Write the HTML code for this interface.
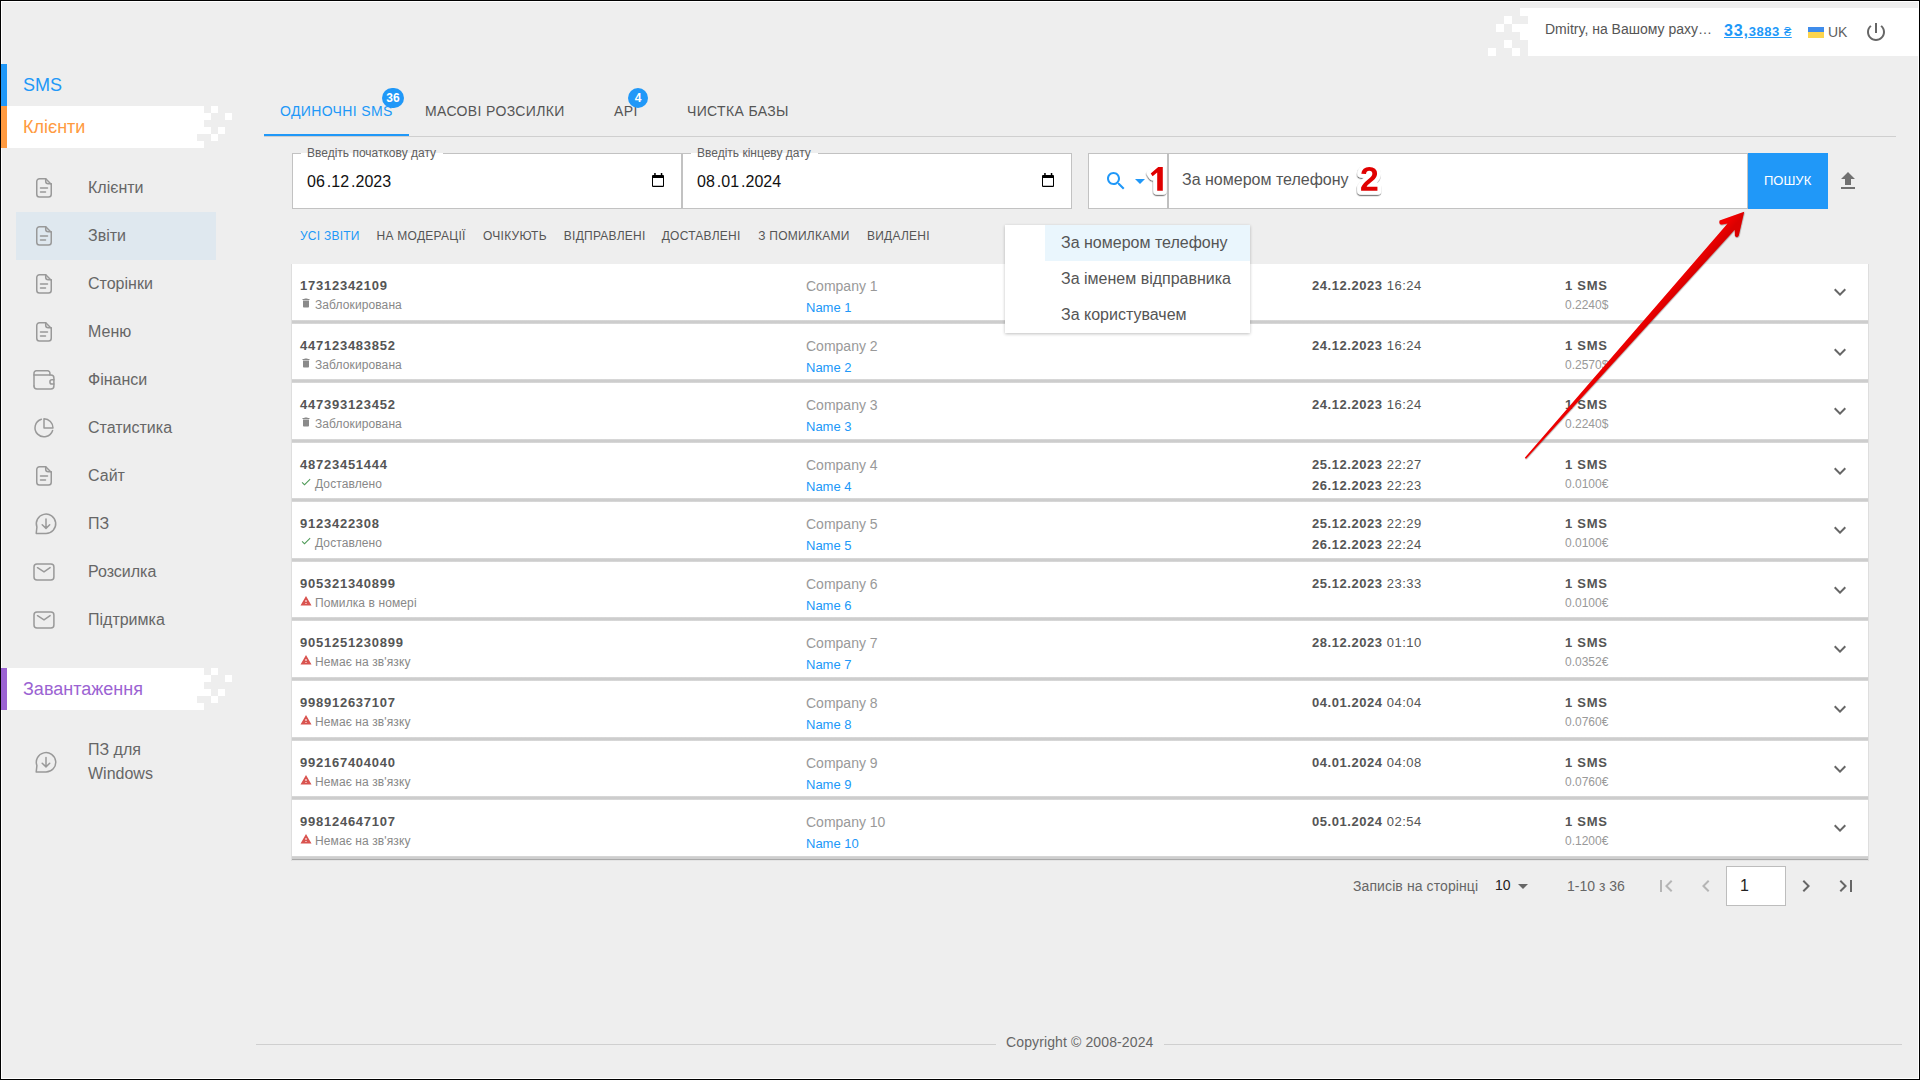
<!DOCTYPE html>
<html><head><meta charset="utf-8"><title>SMS</title>
<style>
*{box-sizing:border-box;margin:0;padding:0}
html,body{width:1920px;height:1080px;overflow:hidden}
body{background:#eeeeee;font-family:"Liberation Sans",sans-serif;position:relative;color:#555}
.a{position:absolute;white-space:nowrap;line-height:20px}
svg{display:block}
#frame{position:absolute;left:0;top:0;width:1920px;height:1080px;border:1px solid #000;box-shadow:inset 0 0 0 1px #fff;pointer-events:none;z-index:100}
/* header */
#hdr{position:absolute;left:1528px;top:8px;width:390px;height:48px;background:#fff}
/* sidebar */
.bar{position:absolute;left:1px;width:6px;z-index:101}
.sec{position:absolute;left:7px;width:197px;height:42px;background:#fff}
.nav{font-size:16px;color:#666;left:88px}
.ico{position:absolute;left:28px;width:24px;height:24px}
/* tabs */
.tab{font-size:14px;letter-spacing:0.36px;color:#555;top:101px}
.badge{position:absolute;height:20px;border-radius:10px;background:#2098f8;color:#fff;font-weight:bold;font-size:12px;line-height:20px;text-align:center}
/* filters */
.flt{font-size:12px;letter-spacing:0.25px;color:#555;top:226px}
/* rows */
.row{position:absolute;left:292px;width:1576px;height:60px;background:#fff;box-shadow:-1px 0 0 #dedede,1px 0 0 #dedede}
.row .sep{position:absolute;left:0;right:0;top:56px;height:4px;background:linear-gradient(#dcdcdc,#cdcdcd 35%,#cdcdcd 65%,#dcdcdc)}
.ph{position:absolute;left:8px;top:12px;font-size:13px;font-weight:bold;color:#555;letter-spacing:0.75px;line-height:20px}
.st{position:absolute;left:23px;top:31px;font-size:12px;color:#888;line-height:20px;letter-spacing:0.1px}
.sti{position:absolute;left:8px;top:33px;width:12px;height:12px}
.co{position:absolute;left:514px;top:12px;font-size:14px;color:#999;line-height:20px}
.nm{position:absolute;left:514px;top:34px;font-size:13px;color:#2098f8;line-height:20px}
.dt{position:absolute;left:1020px;font-size:13px;color:#555;line-height:20px;letter-spacing:0.5px}
.dt b{letter-spacing:0.55px}
.sms{position:absolute;left:1273px;top:12px;font-size:13px;font-weight:bold;color:#555;letter-spacing:0.75px;line-height:20px}
.pr{position:absolute;left:1273px;top:31px;font-size:12px;color:#999;line-height:20px}
.chev{position:absolute;left:1536px;top:16px;width:24px;height:24px}
</style></head>
<body>

<!-- HEADER -->
<svg class="a" style="left:1488px;top:8px" width="40" height="48" viewBox="0 0 40 48">
<g fill="#fff">
<rect x="32" y="0" width="8" height="8"/>
<rect x="16" y="8" width="8" height="8"/>
<rect x="8" y="16" width="8" height="8"/><rect x="24" y="16" width="16" height="8"/>
<rect x="32" y="24" width="8" height="8"/>
<rect x="16" y="32" width="8" height="8"/>
<rect x="0" y="40" width="8" height="8"/><rect x="24" y="40" width="8" height="8"/>
</g></svg>
<div id="hdr"></div>
<div class="a" style="left:1545px;top:19px;font-size:14px;color:#555">Dmitry, на Вашому раху…</div>
<div class="a" style="left:1724px;top:21px;color:#2098f8;font-weight:bold;text-decoration:underline;text-underline-offset:1px"><span style="font-size:16px;letter-spacing:0.8px">33,</span><span style="font-size:13px;letter-spacing:0.55px">3883 <span style="font-weight:normal">₴</span></span></div>
<div class="a" style="left:1808px;top:27px;width:16px;height:11px;background:linear-gradient(#3f8ceb 50%,#fdd54e 50%)"></div>
<div class="a" style="left:1828px;top:22px;font-size:14px;color:#606060">UK</div>
<svg class="a" style="left:1864px;top:20px" width="24" height="24" viewBox="0 0 24 24"><path fill="#666" d="M13 3h-2v10h2V3zm4.83 2.17l-1.42 1.42C17.99 7.86 19 9.81 19 12c0 3.87-3.13 7-7 7s-7-3.13-7-7c0-2.19 1.01-4.14 2.58-5.42L6.17 5.17C4.23 6.82 3 9.26 3 12c0 4.97 4.03 9 9 9s9-4.03 9-9c0-2.74-1.23-5.18-3.17-6.83z"/></svg>

<div class="bar" style="top:64px;height:42px;background:#2098f8"></div>
<div class="a" style="left:23px;top:75px;font-size:18px;color:#2098f8">SMS</div>
<div class="bar" style="top:106px;height:42px;background:#ff9a40"></div>
<div class="sec" style="top:106px;width:190px"></div>
<svg class="a" style="left:197px;top:106px" width="35" height="42" viewBox="0 0 35 42"><g fill="#fff">
<rect x="0" y="0" width="7" height="7"/><rect x="14" y="0" width="7" height="7"/>
<rect x="0" y="7" width="14" height="7"/><rect x="28" y="7" width="7" height="7"/>
<rect x="0" y="14" width="7" height="7"/>
<rect x="0" y="21" width="14" height="7"/><rect x="21" y="21" width="7" height="7"/>
<rect x="14" y="28" width="7" height="7"/>
<rect x="0" y="35" width="7" height="7"/>
</g></svg>
<div class="a" style="left:23px;top:117px;font-size:18px;color:#ff9a40">Клієнти</div>
<div class="a" style="left:16px;top:212px;width:200px;height:48px;background:#dfe8ef"></div>
<div class="a nav" style="top:178px">Клієнти</div>
<div class="a nav" style="top:226px">Звіти</div>
<div class="a nav" style="top:274px">Сторінки</div>
<div class="a nav" style="top:322px">Меню</div>
<div class="a nav" style="top:370px">Фінанси</div>
<div class="a nav" style="top:418px">Статистика</div>
<div class="a nav" style="top:466px">Сайт</div>
<div class="a nav" style="top:514px">ПЗ</div>
<div class="a nav" style="top:562px">Розсилка</div>
<div class="a nav" style="top:610px">Підтримка</div>
<div class="bar" style="top:668px;height:42px;background:#9b63d2"></div>
<div class="sec" style="top:668px;width:190px"></div>
<svg class="a" style="left:197px;top:668px" width="35" height="42" viewBox="0 0 35 42"><g fill="#fff">
<rect x="0" y="0" width="7" height="7"/><rect x="14" y="0" width="7" height="7"/>
<rect x="0" y="7" width="14" height="7"/><rect x="28" y="7" width="7" height="7"/>
<rect x="0" y="14" width="7" height="7"/>
<rect x="0" y="21" width="14" height="7"/><rect x="21" y="21" width="7" height="7"/>
<rect x="14" y="28" width="7" height="7"/>
<rect x="0" y="35" width="7" height="7"/>
</g></svg>
<div class="a" style="left:23px;top:679px;font-size:18px;color:#9b63d2">Завантаження</div>
<div class="a nav" style="top:738px;line-height:24px">ПЗ для<br>Windows</div>
<svg class="a" style="left:0;top:0" width="70" height="800" viewBox="0 0 70 800"><g fill="none" stroke="#999" stroke-width="1.5" stroke-linecap="round"><g transform="translate(36 178)"><path d="M3.5 0.75H9.7L15.25 6.3V16.25A2.75 2.75 0 0 1 12.5 19H3.5A2.75 2.75 0 0 1 0.75 16.25V3.5A2.75 2.75 0 0 1 3.5 0.75Z"/><path d="M9.7 0.75V3.3A2.5 2.5 0 0 0 12.2 5.8H15.25"/><path d="M4.5 10H11.5M4.5 14H9.5"/></g><g transform="translate(36 226)"><path d="M3.5 0.75H9.7L15.25 6.3V16.25A2.75 2.75 0 0 1 12.5 19H3.5A2.75 2.75 0 0 1 0.75 16.25V3.5A2.75 2.75 0 0 1 3.5 0.75Z"/><path d="M9.7 0.75V3.3A2.5 2.5 0 0 0 12.2 5.8H15.25"/><path d="M4.5 10H11.5M4.5 14H9.5"/></g><g transform="translate(36 274)"><path d="M3.5 0.75H9.7L15.25 6.3V16.25A2.75 2.75 0 0 1 12.5 19H3.5A2.75 2.75 0 0 1 0.75 16.25V3.5A2.75 2.75 0 0 1 3.5 0.75Z"/><path d="M9.7 0.75V3.3A2.5 2.5 0 0 0 12.2 5.8H15.25"/><path d="M4.5 10H11.5M4.5 14H9.5"/></g><g transform="translate(36 322)"><path d="M3.5 0.75H9.7L15.25 6.3V16.25A2.75 2.75 0 0 1 12.5 19H3.5A2.75 2.75 0 0 1 0.75 16.25V3.5A2.75 2.75 0 0 1 3.5 0.75Z"/><path d="M9.7 0.75V3.3A2.5 2.5 0 0 0 12.2 5.8H15.25"/><path d="M4.5 10H11.5M4.5 14H9.5"/></g><g transform="translate(36 466)"><path d="M3.5 0.75H9.7L15.25 6.3V16.25A2.75 2.75 0 0 1 12.5 19H3.5A2.75 2.75 0 0 1 0.75 16.25V3.5A2.75 2.75 0 0 1 3.5 0.75Z"/><path d="M9.7 0.75V3.3A2.5 2.5 0 0 0 12.2 5.8H15.25"/><path d="M4.5 10H11.5M4.5 14H9.5"/></g><path d="M34 385.9V373A2.2 2.2 0 0 1 36.2 370.8H47.7A2.2 2.2 0 0 1 49.9 373V374.9"/><path d="M34 374.9H50.9A3 3 0 0 1 53.9 377.9V385.9A3 3 0 0 1 50.9 388.9H37A3 3 0 0 1 34 385.9"/><path d="M53.9 379.8H52A2.1 2.1 0 0 0 52 384H53.9"/><path d="M41.4 419.2A9 9 0 1 0 52.6 430.5"/><path d="M44 418.7V428H53A9.3 9.3 0 0 0 44 418.7Z" stroke-linejoin="round"/><g transform="translate(0 0.0)"><path d="M46 533.5A9.7 9.7 0 1 0 36.9 527.1L36.2 533.4Z" stroke-linejoin="round"/><path d="M46 519.1V528.4M42.2 524.8L46 528.4L49.7 524.8"/></g><g transform="translate(0 0.0)"><rect x="34" y="563.9" width="19.9" height="16.15" rx="3"/><path d="M37.5 567.7L44 571.9L50.1 567.6"/></g><g transform="translate(0 48.0)"><rect x="34" y="563.9" width="19.9" height="16.15" rx="3"/><path d="M37.5 567.7L44 571.9L50.1 567.6"/></g><g transform="translate(0 238.5)"><path d="M46 533.5A9.7 9.7 0 1 0 36.9 527.1L36.2 533.4Z" stroke-linejoin="round"/><path d="M46 519.1V528.4M42.2 524.8L46 528.4L49.7 524.8"/></g></g></svg>
<div class="a" style="left:264px;top:136px;width:1632px;height:1px;background:#cfcfcf"></div>
<div class="a" style="left:264px;top:134px;width:145px;height:2px;background:#2098f8"></div>
<div class="a tab" style="left:280px;color:#2098f8">ОДИНОЧНІ SMS</div>
<div class="a tab" style="left:425px">МАСОВІ РОЗСИЛКИ</div>
<div class="a tab" style="left:614px">API</div>
<div class="a tab" style="left:687px">ЧИСТКА БАЗЫ</div>
<div class="badge" style="left:382px;top:88px;width:22px">36</div>
<div class="badge" style="left:628px;top:88px;width:20px">4</div>
<div class="a" style="left:292px;top:153px;width:390px;height:56px;background:#fff;border:1px solid #c2c2c2;border-top:none"></div><div class="a" style="left:292px;top:153px;width:9px;height:1px;background:#c2c2c2"></div><div class="a" style="left:443px;top:153px;width:239px;height:1px;background:#c2c2c2"></div><div class="a" style="left:307px;top:143px;font-size:12px;color:#606060">Введіть початкову дату</div><div class="a" style="left:307px;top:172px;font-size:16px;color:#111">06<span style="margin-left:2px">.</span>12<span style="margin-left:2px">.</span>2023</div><svg class="a" style="left:652px;top:173px" width="12" height="14" viewBox="0 0 12 14"><path fill="#000" d="M1 2H11A1 1 0 0 1 12 3V13A1 1 0 0 1 11 14H1A1 1 0 0 1 0 13V3A1 1 0 0 1 1 2ZM1 5V12.8H11V5Z"/><rect x="2.2" y="0" width="1.5" height="2.5" fill="#000"/><rect x="8.8" y="0" width="1.5" height="2.5" fill="#000"/></svg>
<div class="a" style="left:682px;top:153px;width:390px;height:56px;background:#fff;border:1px solid #c2c2c2;border-top:none"></div><div class="a" style="left:682px;top:153px;width:9px;height:1px;background:#c2c2c2"></div><div class="a" style="left:818px;top:153px;width:254px;height:1px;background:#c2c2c2"></div><div class="a" style="left:697px;top:143px;font-size:12px;color:#606060">Введіть кінцеву дату</div><div class="a" style="left:697px;top:172px;font-size:16px;color:#111">08<span style="margin-left:2px">.</span>01<span style="margin-left:2px">.</span>2024</div><svg class="a" style="left:1042px;top:173px" width="12" height="14" viewBox="0 0 12 14"><path fill="#000" d="M1 2H11A1 1 0 0 1 12 3V13A1 1 0 0 1 11 14H1A1 1 0 0 1 0 13V3A1 1 0 0 1 1 2ZM1 5V12.8H11V5Z"/><rect x="2.2" y="0" width="1.5" height="2.5" fill="#000"/><rect x="8.8" y="0" width="1.5" height="2.5" fill="#000"/></svg>
<div class="a" style="left:1088px;top:153px;width:660px;height:56px;background:#fff;border:1px solid #c2c2c2"></div>
<div class="a" style="left:1167px;top:153px;width:2px;height:56px;background:#c0c0c0"></div>
<svg class="a" style="left:1104px;top:169px" width="24" height="24" viewBox="0 0 24 24"><path fill="#2098f8" d="M15.5 14h-.79l-.28-.27C15.41 12.59 16 11.11 16 9.5 16 5.91 13.09 3 9.5 3S3 5.91 3 9.5 5.91 16 9.5 16c1.61 0 3.09-.59 4.23-1.57l.27.28v.79l5 4.99L20.49 19l-4.99-5zm-6 0C7.01 14 5 11.990 5 9.5S7.01 5 9.5 5 14 7.01 14 9.5 11.99 14 9.5 14z"/></svg>
<svg class="a" style="left:1128px;top:169px" width="24" height="24" viewBox="0 0 24 24"><path fill="#2098f8" d="M7 10l5 5 5-5z"/></svg>
<div class="a" style="left:1182px;top:170px;font-size:16px;color:#555">За номером телефону</div>
<div class="a" style="left:1748px;top:153px;width:80px;height:56px;background:#2098f8"></div>
<div class="a" style="left:1764px;top:171px;font-size:13px;color:#fff">ПОШУК</div>
<svg class="a" style="left:1836px;top:169px" width="24" height="24" viewBox="0 0 24 24"><path fill="#707070" d="M9 16h6v-6h4l-7-7-7 7h4zm-4 2h14v2H5z"/></svg>
<div class="a flt" style="left:300px;color:#2098f8">УСІ ЗВІТИ</div>
<div class="a flt" style="left:376.6px">НА МОДЕРАЦІЇ</div>
<div class="a flt" style="left:483px">ОЧІКУЮТЬ</div>
<div class="a flt" style="left:563.8px">ВІДПРАВЛЕНІ</div>
<div class="a flt" style="left:661.7px">ДОСТАВЛЕНІ</div>
<div class="a flt" style="left:758.2px">З ПОМИЛКАМИ</div>
<div class="a flt" style="left:866.9px">ВИДАЛЕНІ</div>
<div class="row" style="top:264px;height:60px"><div class="ph">17312342109</div><svg class="sti" viewBox="0 0 24 24"><path fill="#8a8a8a" d="M6 19c0 1.1.9 2 2 2h8c1.1 0 2-.9 2-2V7H6v12zM19 4h-3.5l-1-1h-5l-1 1H5v2h14V4z"/></svg><div class="st">Заблокирована</div><div class="co">Company 1</div><div class="nm">Name 1</div><div class="dt" style="top:12px"><b>24.12.2023</b> 16:24</div><div class="sms">1 SMS</div><div class="pr">0.2240$</div><svg class="chev" viewBox="0 0 24 24"><path fill="#666" d="M16.59 8.59L12 13.17 7.41 8.59 6 10l6 6 6-6z"/></svg><div class="sep" style="top:56px"></div></div>
<div class="row" style="top:324px;height:59px"><div class="ph">447123483852</div><svg class="sti" viewBox="0 0 24 24"><path fill="#8a8a8a" d="M6 19c0 1.1.9 2 2 2h8c1.1 0 2-.9 2-2V7H6v12zM19 4h-3.5l-1-1h-5l-1 1H5v2h14V4z"/></svg><div class="st">Заблокирована</div><div class="co">Company 2</div><div class="nm">Name 2</div><div class="dt" style="top:12px"><b>24.12.2023</b> 16:24</div><div class="sms">1 SMS</div><div class="pr">0.2570$</div><svg class="chev" viewBox="0 0 24 24"><path fill="#666" d="M16.59 8.59L12 13.17 7.41 8.59 6 10l6 6 6-6z"/></svg><div class="sep" style="top:55px"></div></div>
<div class="row" style="top:383px;height:60px"><div class="ph">447393123452</div><svg class="sti" viewBox="0 0 24 24"><path fill="#8a8a8a" d="M6 19c0 1.1.9 2 2 2h8c1.1 0 2-.9 2-2V7H6v12zM19 4h-3.5l-1-1h-5l-1 1H5v2h14V4z"/></svg><div class="st">Заблокирована</div><div class="co">Company 3</div><div class="nm">Name 3</div><div class="dt" style="top:12px"><b>24.12.2023</b> 16:24</div><div class="sms">1 SMS</div><div class="pr">0.2240$</div><svg class="chev" viewBox="0 0 24 24"><path fill="#666" d="M16.59 8.59L12 13.17 7.41 8.59 6 10l6 6 6-6z"/></svg><div class="sep" style="top:56px"></div></div>
<div class="row" style="top:443px;height:59px"><div class="ph">48723451444</div><svg class="sti" viewBox="0 0 24 24"><path fill="#4e9a57" d="M9 16.17L4.83 12l-1.42 1.41L9 19 21 7l-1.41-1.41z"/></svg><div class="st">Доставлено</div><div class="co">Company 4</div><div class="nm">Name 4</div><div class="dt" style="top:12px"><b>25.12.2023</b> 22:27</div><div class="dt" style="top:33px"><b>26.12.2023</b> 22:23</div><div class="sms">1 SMS</div><div class="pr">0.0100€</div><svg class="chev" viewBox="0 0 24 24"><path fill="#666" d="M16.59 8.59L12 13.17 7.41 8.59 6 10l6 6 6-6z"/></svg><div class="sep" style="top:55px"></div></div>
<div class="row" style="top:502px;height:60px"><div class="ph">9123422308</div><svg class="sti" viewBox="0 0 24 24"><path fill="#4e9a57" d="M9 16.17L4.83 12l-1.42 1.41L9 19 21 7l-1.41-1.41z"/></svg><div class="st">Доставлено</div><div class="co">Company 5</div><div class="nm">Name 5</div><div class="dt" style="top:12px"><b>25.12.2023</b> 22:29</div><div class="dt" style="top:33px"><b>26.12.2023</b> 22:24</div><div class="sms">1 SMS</div><div class="pr">0.0100€</div><svg class="chev" viewBox="0 0 24 24"><path fill="#666" d="M16.59 8.59L12 13.17 7.41 8.59 6 10l6 6 6-6z"/></svg><div class="sep" style="top:56px"></div></div>
<div class="row" style="top:562px;height:59px"><div class="ph">905321340899</div><svg class="sti" viewBox="0 0 24 24"><path fill="#d9534f" d="M1 21h22L12 2 1 21zm12-3h-2v-2h2v2zm0-4h-2v-4h2v4z"/></svg><div class="st">Помилка в номері</div><div class="co">Company 6</div><div class="nm">Name 6</div><div class="dt" style="top:12px"><b>25.12.2023</b> 23:33</div><div class="sms">1 SMS</div><div class="pr">0.0100€</div><svg class="chev" viewBox="0 0 24 24"><path fill="#666" d="M16.59 8.59L12 13.17 7.41 8.59 6 10l6 6 6-6z"/></svg><div class="sep" style="top:55px"></div></div>
<div class="row" style="top:621px;height:60px"><div class="ph">9051251230899</div><svg class="sti" viewBox="0 0 24 24"><path fill="#d9534f" d="M1 21h22L12 2 1 21zm12-3h-2v-2h2v2zm0-4h-2v-4h2v4z"/></svg><div class="st">Немає на зв'язку</div><div class="co">Company 7</div><div class="nm">Name 7</div><div class="dt" style="top:12px"><b>28.12.2023</b> 01:10</div><div class="sms">1 SMS</div><div class="pr">0.0352€</div><svg class="chev" viewBox="0 0 24 24"><path fill="#666" d="M16.59 8.59L12 13.17 7.41 8.59 6 10l6 6 6-6z"/></svg><div class="sep" style="top:56px"></div></div>
<div class="row" style="top:681px;height:60px"><div class="ph">998912637107</div><svg class="sti" viewBox="0 0 24 24"><path fill="#d9534f" d="M1 21h22L12 2 1 21zm12-3h-2v-2h2v2zm0-4h-2v-4h2v4z"/></svg><div class="st">Немає на зв'язку</div><div class="co">Company 8</div><div class="nm">Name 8</div><div class="dt" style="top:12px"><b>04.01.2024</b> 04:04</div><div class="sms">1 SMS</div><div class="pr">0.0760€</div><svg class="chev" viewBox="0 0 24 24"><path fill="#666" d="M16.59 8.59L12 13.17 7.41 8.59 6 10l6 6 6-6z"/></svg><div class="sep" style="top:56px"></div></div>
<div class="row" style="top:741px;height:59px"><div class="ph">992167404040</div><svg class="sti" viewBox="0 0 24 24"><path fill="#d9534f" d="M1 21h22L12 2 1 21zm12-3h-2v-2h2v2zm0-4h-2v-4h2v4z"/></svg><div class="st">Немає на зв'язку</div><div class="co">Company 9</div><div class="nm">Name 9</div><div class="dt" style="top:12px"><b>04.01.2024</b> 04:08</div><div class="sms">1 SMS</div><div class="pr">0.0760€</div><svg class="chev" viewBox="0 0 24 24"><path fill="#666" d="M16.59 8.59L12 13.17 7.41 8.59 6 10l6 6 6-6z"/></svg><div class="sep" style="top:55px"></div></div>
<div class="row" style="top:800px;height:61px"><div class="ph">998124647107</div><svg class="sti" viewBox="0 0 24 24"><path fill="#d9534f" d="M1 21h22L12 2 1 21zm12-3h-2v-2h2v2zm0-4h-2v-4h2v4z"/></svg><div class="st">Немає на зв'язку</div><div class="co">Company 10</div><div class="nm">Name 10</div><div class="dt" style="top:12px"><b>05.01.2024</b> 02:54</div><div class="sms">1 SMS</div><div class="pr">0.1200€</div><svg class="chev" viewBox="0 0 24 24"><path fill="#666" d="M16.59 8.59L12 13.17 7.41 8.59 6 10l6 6 6-6z"/></svg><div class="sep" style="top:56px;height:4px;background:linear-gradient(#dadada,#cecece 30%,#cecece 70%,#a9a9a9 75%,#a9a9a9)"></div><div class="sep" style="top:60px;height:1px;background:#e4e4e4"></div></div>
<div class="a" style="left:1005px;top:225px;width:245px;height:108px;background:#fff;box-shadow:0 1px 3px rgba(0,0,0,.25);z-index:10"></div>
<div class="a" style="left:1045px;top:225px;width:205px;height:36px;background:#eaf6fd;z-index:11"></div>
<div class="a" style="left:1061px;top:233px;font-size:16px;color:#555;z-index:12">За номером телефону</div>
<div class="a" style="left:1061px;top:269px;font-size:16px;color:#555;z-index:12">За іменем відправника</div>
<div class="a" style="left:1061px;top:305px;font-size:16px;color:#555;z-index:12">За користувачем</div>
<div class="a" style="left:1353px;top:876px;font-size:14px;color:#666;letter-spacing:0.1px">Записів на сторінці</div>
<div class="a" style="left:1495px;top:875px;font-size:14px;color:#222">10</div>
<svg class="a" style="left:1511px;top:874px" width="24" height="24" viewBox="0 0 24 24"><path fill="#666" d="M7 10l5 5 5-5z"/></svg>
<div class="a" style="left:1567px;top:876px;font-size:14px;color:#666">1-10 з 36</div>
<svg class="a" style="left:1654px;top:874px" width="24" height="24" viewBox="0 0 24 24"><path fill="#b5b5b5" d="M18.41 16.59L13.82 12l4.59-4.59L17 6l-6 6 6 6zM6 6h2v12H6z"/></svg>
<svg class="a" style="left:1694px;top:874px" width="24" height="24" viewBox="0 0 24 24"><path fill="#b5b5b5" d="M15.41 7.41L14 6l-6 6 6 6 1.41-1.41L10.83 12z"/></svg>
<div class="a" style="left:1726px;top:866px;width:60px;height:40px;background:#fff;border:1px solid #bdbdbd"></div>
<div class="a" style="left:1740px;top:876px;font-size:16px;color:#222">1</div>
<svg class="a" style="left:1794px;top:874px" width="24" height="24" viewBox="0 0 24 24"><path fill="#666" d="M10 6L8.59 7.41 13.17 12l-4.58 4.59L10 18l6-6z"/></svg>
<svg class="a" style="left:1834px;top:874px" width="24" height="24" viewBox="0 0 24 24"><path fill="#666" d="M5.59 7.41L10.18 12l-4.59 4.59L7 18l6-6-6-6zM16 6h2v12h-2z"/></svg>
<div class="a" style="left:256px;top:1044px;width:740px;height:1px;background:#cfcfcf"></div>
<div class="a" style="left:1164px;top:1044px;width:738px;height:1px;background:#cfcfcf"></div>
<div class="a" style="left:1006px;top:1032px;font-size:14px;color:#666;letter-spacing:0.12px">Copyright © 2008-2024</div>
<svg class="a" style="left:0;top:0;z-index:20" width="1920" height="260" viewBox="0 0 1920 260">
<defs><filter id="sh" x="-30%" y="-30%" width="160%" height="160%"><feDropShadow dx="-0.3" dy="1.2" stdDeviation="0.7" flood-color="#000" flood-opacity="0.6"/></filter></defs>
<g filter="url(#sh)" fill="#fff" stroke="#fff" stroke-width="8" stroke-linejoin="round"><path d="M1158.2 167H1162.8V190.7H1157.2V172.6L1152.6 176.2L1150.7 173.4Z"/><g transform="translate(1359.92 190.7) scale(0.01657 -0.01657)"><path d="M71 0V195Q126 316 227.5 431.0Q329 546 483 671Q631 791 690.5 869.0Q750 947 750 1022Q750 1206 565 1206Q475 1206 427.5 1157.5Q380 1109 366 1012L83 1028Q107 1224 229.5 1327.0Q352 1430 563 1430Q791 1430 913.0 1326.0Q1035 1222 1035 1034Q1035 935 996.0 855.0Q957 775 896.0 707.5Q835 640 760.5 581.0Q686 522 616.0 466.0Q546 410 488.5 353.0Q431 296 403 231H1057V0Z" stroke-width="483"/></g></g>
<g fill="#e00000"><path d="M1158.2 167H1162.8V190.7H1157.2V172.6L1152.6 176.2L1150.7 173.4Z"/><g transform="translate(1359.92 190.7) scale(0.01657 -0.01657)"><path d="M71 0V195Q126 316 227.5 431.0Q329 546 483 671Q631 791 690.5 869.0Q750 947 750 1022Q750 1206 565 1206Q475 1206 427.5 1157.5Q380 1109 366 1012L83 1028Q107 1224 229.5 1327.0Q352 1430 563 1430Q791 1430 913.0 1326.0Q1035 1222 1035 1034Q1035 935 996.0 855.0Q957 775 896.0 707.5Q835 640 760.5 581.0Q686 522 616.0 466.0Q546 410 488.5 353.0Q431 296 403 231H1057V0Z"/></g></g>
</svg>
<svg class="a" style="left:0;top:0;z-index:30" width="1920" height="1080" viewBox="0 0 1920 1080">
<defs><linearGradient id="ag" gradientUnits="userSpaceOnUse" x1="1626" y1="338" x2="1633" y2="344"><stop offset="0" stop-color="#f40000"/><stop offset="1" stop-color="#da0000"/></linearGradient>
<filter id="ash" x="-10%" y="-10%" width="120%" height="120%"><feDropShadow dx="0.4" dy="0.6" stdDeviation="0.5" flood-color="#000" flood-opacity="0.45"/></filter></defs>
<path filter="url(#ash)" fill="url(#ag)" d="M1524.8 457.7L1727.6 223.5L1722 224.6Q1718.5 224.5 1719.6 220.6L1744.2 211.7L1738.8 235.6Q1737 238.5 1734.9 236L1734.7 229.8L1526 458.7Z"/>
</svg>
<div id="frame"></div>
</body></html>
